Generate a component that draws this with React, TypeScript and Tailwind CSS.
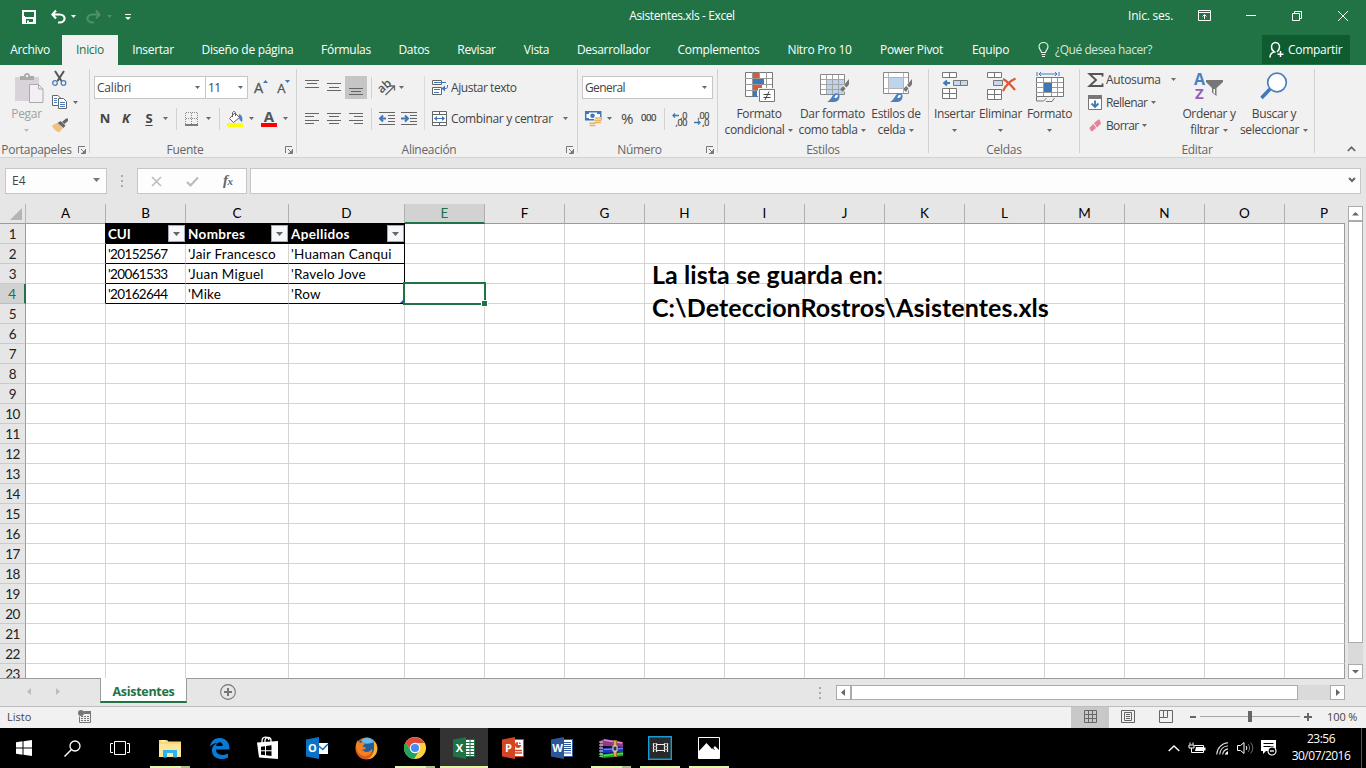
import type { ReactNode } from "react";

type Kids = { children?: ReactNode };

function Svg({ w, h, className = "", children }: Kids & { w: number; h: number; className?: string }) {
  return (
    <svg width={w} height={h} viewBox={`0 0 ${w} ${h}`} fill="none" className={`block shrink-0 overflow-visible ${className}`}>
      {children}
    </svg>
  );
}

function Arrow({ className = "", color = "#6a6a6a" }: { className?: string; color?: string }) {
  return (
    <Svg w={5} h={3} className={className}>
      <path d="M0 0h5L2.500 3z" fill={color} />
    </Svg>
  );
}

function Launcher() {
  return (
    <Svg w={8} h={8} className="ml-[5px]">
      <path d="M.5 7V.5H7M3 3l3 3M7.500 3v4.500H3" stroke="#777" />
      <path d="M7 4v3H4z" fill="#777" />
    </Svg>
  );
}

function Group({ width, label, launcher, children }: Kids & { width: string; label: string; launcher?: boolean }) {
  return (
    <section className={`flex h-[92px] shrink-0 ${width}`}>
      <div className="flex min-w-0 flex-1 flex-col">
        <div className="h-[76px]">{children}</div>
        <div className="flex h-4 items-center pt-[1px]">
          <div className="flex-1 text-center tracking-[-0.3px] whitespace-nowrap text-[#666]">{label}</div>
          {launcher && (
            <div className="w-4">
              <Launcher />
            </div>
          )}
        </div>
      </div>
      <div className="mt-1 h-[84px] w-px bg-[#d2d2d2]" />
    </section>
  );
}

function Big({ width, icon, top, bottom }: { width: string; icon: ReactNode; top: string; bottom?: string }) {
  return (
    <div className={`flex shrink-0 flex-col items-center pt-[7px] tracking-[-0.35px] ${width}`}>
      <div className="flex h-8 items-start justify-center">{icon}</div>
      <div className="mt-[2px] h-4 leading-4 whitespace-nowrap">{top}</div>
      <div className="flex h-4 items-center gap-1 leading-4 whitespace-nowrap">
        {bottom}
        <Arrow />
      </div>
    </div>
  );
}

function Lines({ ys, xs, className = "" }: { ys: number[]; xs: [number, number][]; className?: string }) {
  return (
    <Svg w={14} h={16} className={className}>
      {ys.map((y, i) => (
        <path key={y} d={`M${xs[i][0]} ${y + 0.5}H${xs[i][1]}`} stroke="#666" />
      ))}
    </Svg>
  );
}

function Brush() {
  return (
    <>
      <path d="M29.500 6v6.500l-5.500 8-4-3.500z" fill="#f1f1f1" />
      <path d="M29 7v5.500l-2.500 3-2.500-2.500z" fill="#777" />
      <path d="m23.200 14 2.300 2.500-2.500 3.500-3-2.700z" fill="#777" />
      <path d="M7 30c3-1.500 4-4 6-7 2-2.500 6-2.500 6.500.500.5 3-1.500 6.500-5.500 6.500z" fill="#4a80bd" />
      <path d="M14.500 26c0-2.500 1.500-3.500 3-3.300 1 1.800-.5 3.500-3 3.300z" fill="#fff" />
    </>
  );
}

const full: [number, number] = [0, 14];

/* ---------- title bar ---------- */

function TitleBar() {
  return (
    <header className="flex h-[35px] items-center text-white">
      <Svg w={14} h={14} className="ml-[22px] mt-[-1px]">
        <path d="M0 0h14v14H0z" fill="#fff" />
        <path d="M3 2h9v5H3zM4 9h7v4H4zM2 2h1v4H2z" fill="#217346" />
        <path d="M5 10.500h2V14H5zM7 12h4v2H7z" fill="#fff" />
        <path d="M5 13h2v-2H5z" fill="#fff" />
      </Svg>
      <Svg w={15} h={14} className="ml-[15px] mt-[-1px]">
        <path d="M5 .5 1.500 4.500 5 8.500M2 4.500h6.500c7 0 6.500 8 0 8H7" stroke="#fff" strokeWidth="2.200" />
      </Svg>
      <Arrow color="#fff" className="ml-[5px] mt-[-2px]" />
      <Svg w={15} h={14} className="ml-[10px] mt-[-1px]">
        <path d="m10 .5 3.500 4-3.500 4M13 4.500H6.500c-7 0-6.500 8 0 8H8" stroke="#4f9069" strokeWidth="2" />
      </Svg>
      <Arrow color="#4f9069" className="ml-[6px] mt-[-2px]" />
      <Svg w={6} h={7} className="ml-[13px] mt-[-1px]">
        <path d="M0 .5h6" stroke="#fff" />
        <path d="M0 3h6L3 6z" fill="#fff" />
      </Svg>
      <div className="mt-[-3px] ml-[497px] w-[108px] text-center tracking-[-0.38px] whitespace-nowrap">Asistentes.xls - Excel</div>
      <div className="mt-[-3px] ml-[392px] w-[48px] tracking-[-0.2px] whitespace-nowrap">Inic. ses.</div>
      <Svg w={13} h={11} className="ml-[22px] mt-[-4px]">
        <path d="M.5.5h12v10H.5zM.5 2.500h12M6.500 9V4.500M4.500 6.500l2-2 2 2" stroke="#fff" />
      </Svg>
      <div className="ml-[35px] mt-[-4px] h-px w-[10px] bg-white" />
      <Svg w={10} h={10} className="ml-[36px] mt-[-4px]">
        <path d="M.5 2.500h7v7h-7zM2.500 2.500v-2h7v7h-2" stroke="#fff" />
      </Svg>
      <Svg w={10} h={10} className="ml-[36px] mt-[-4px]">
        <path d="m0 0 10 10M10 0 0 10" stroke="#fff" />
      </Svg>
    </header>
  );
}

const tabs: [string, string][] = [
  ["Archivo", "w-[60px]"],
  ["Inicio", "ml-[2px] w-[56px] bg-[#f1f1f1] text-[#217346]"],
  ["Insertar", "w-[70px]"],
  ["Diseño de página", "w-[119px]"],
  ["Fórmulas", "w-[78px]"],
  ["Datos", "w-[58px]"],
  ["Revisar", "w-[67px]"],
  ["Vista", "w-[53px]"],
  ["Desarrollador", "w-[101px]"],
  ["Complementos", "w-[109px]"],
  ["Nitro Pro 10", "w-[93px]"],
  ["Power Pivot", "w-[91px]"],
  ["Equipo", "w-[67px]"],
];

function TabBar() {
  return (
    <nav className="flex h-[30px] items-stretch text-white">
      {tabs.map(([name, cls]) => (
        <div key={name} className={`flex shrink-0 items-center justify-center tracking-[-0.3px] whitespace-nowrap ${cls}`}>
          {name}
        </div>
      ))}
      <div className="ml-[14px] flex items-center text-[#d6e6dc]">
        <Svg w={11} h={15} className="mt-[-2px]">
          <path d="M3.500 10.500C3.500 8.500 1 7.500 1 4.800a4.500 4.300 0 0 1 9 0c0 2.700-2.500 3.700-2.500 5.700zM3.500 12.500h4M4 14.500h3" stroke="#e8f1ec" strokeWidth="1.200" />
        </Svg>
        <span className="ml-[6px] tracking-[-0.45px] whitespace-nowrap">¿Qué desea hacer?</span>
      </div>
      <div className="ml-auto mr-4 flex h-[29px] w-[88px] items-center bg-[#0e5c2f]">
        <Svg w={15} h={16} className="ml-[7px]">
          <path d="M1 15.500c0-3 2-5 4.300-5.500C3 8.500 2.500 6.500 2.500 5a4 4.500 0 0 1 8 0c0 1.500-.5 3.500-2.500 5M11.500 9v6M8.500 12.300h6" stroke="#fff" strokeWidth="1.500" />
        </Svg>
        <span className="ml-1 tracking-[-0.28px]">Compartir</span>
      </div>
    </nav>
  );
}

/* ---------- ribbon ---------- */

function Clipboard() {
  return (
    <Group width="w-[90px]" label="Portapapeles" launcher>
      <div className="flex">
        <div className="ml-2 flex w-[37px] flex-col items-center pt-2">
          <Svg w={29} h={31} className="ml-[6px]">
            <path d="M0 4h24v24H0z" fill="#d8d3d8" />
            <path d="M5 3h4c0-4 6-4 6 0h4v4H5z" fill="#aaa" />
            <path d="M11 2h2v2h-2z" fill="#f1f1f1" />
            <path d="M14.500 11.500h9l4.500 4.500v13.500H14.500z" fill="#f4eef5" stroke="#aaa" />
            <path d="M23.500 11.500v4.500H28" stroke="#aaa" />
          </Svg>
          <div className="mt-[2px] h-4 leading-4 tracking-[-0.3px] text-[#a0a0a0]">Pegar</div>
          <Arrow color="#bbb" className="mt-[7px]" />
        </div>
        <div className="ml-[7px] pt-[6px]">
          <Svg w={15} h={16}>
            <path d="m3 0 6.500 10M12 0 5.500 10" stroke="#555" strokeWidth="2" />
            <circle cx="3" cy="12" r="2.300" stroke="#4a80bd" strokeWidth="1.300" />
            <circle cx="11.500" cy="12" r="2.300" stroke="#4a80bd" strokeWidth="1.300" />
          </Svg>
          <div className="mt-[8px] flex items-center">
            <Svg w={16} h={15}>
              <path d="M.5.5H6L8.500 3v7.500h-8z" fill="#fff" stroke="#666" />
              <path d="M2 3.500h3M2 5.500h3M2 7.500h3" stroke="#4a80bd" />
              <path d="M6.500 3.500h5l3 3v7h-8z" fill="#fff" stroke="#666" />
              <path d="M8 7.500h5M8 9.500h5M8 11.500h5" stroke="#4a80bd" />
            </Svg>
            <Arrow className="ml-[5px]" />
          </div>
          <Svg w={16} h={15} className="mt-[8px]">
            <path d="M0 7.500 5 5l6 5-4 4.500C4 13 1 11 0 7.500z" fill="#edc184" />
            <path d="m5.500 5 3-2 5 4.500-2 2.500z" fill="#666" />
            <path d="m10 4 4-3.500h2V3l-3.500 3z" fill="#666" />
          </Svg>
        </div>
      </div>
    </Group>
  );
}

const VSep = ({ className = "" }: { className?: string }) => <div className={`h-[22px] w-px bg-[#d2d2d2] ${className}`} />;

function FontGroup() {
  return (
    <Group width="w-[207px]" label="Fuente" launcher>
      <div className="flex flex-col gap-2 pt-[11px]">
        <div className="flex h-[23px] items-center">
          <div className="ml-1 flex h-[23px] w-[112px] items-center justify-between border border-[#c6c6c6] bg-white pr-[5px] pl-[2px]">
            <span className="tracking-[-0.2px]">Calibri</span>
            <Arrow />
          </div>
          <div className="ml-[-1px] flex h-[23px] w-[43px] items-center justify-between border border-[#c6c6c6] bg-white pr-1 pl-[2px]">
            <span className="tracking-[-0.5px]">11</span>
            <Arrow />
          </div>
          <div className="ml-[6px] flex h-full items-end pb-[3px] text-[14.5px] leading-[17px] text-[#555]">
            <span className="[-webkit-text-stroke:0.3px_#555]">A</span>
            <Svg w={5} h={3} className="mb-[13px]">
              <path d="M0 3h5L2.500 0z" fill="#3f78b8" />
            </Svg>
          </div>
          <div className="ml-[9px] flex h-full items-end pb-[3px] text-[13px] leading-[16px] text-[#555]">
            <span className="[-webkit-text-stroke:0.3px_#555]">A</span>
            <Svg w={5} h={3} className="mb-[13px]">
              <path d="M0 0h5L2.500 3z" fill="#3f78b8" />
            </Svg>
          </div>
        </div>
        <div className="flex h-[23px] items-center text-[13px] font-bold text-[#444]">
          <span className="mt-[-2px] ml-[9px] w-[12px] text-center">N</span>
          <span className="mt-[-2px] ml-[9px] w-[12px] text-center italic">K</span>
          <span className="mt-[-2px] ml-[12px] w-[10px] text-center underline underline-offset-2">S</span>
          <Arrow className="ml-[9px]" />
          <VSep className="ml-[8px]" />
          <Svg w={13} h={14} className="ml-[8px]">
            <path d="M.5 1v11M12.500 1v11M6.500 1v11M1 .5h12M1 6.500h12" stroke="#888" strokeDasharray="1 1" />
            <path d="M0 13h13" stroke="#555" strokeWidth="1.500" />
          </Svg>
          <Arrow className="ml-[8px]" />
          <VSep className="ml-[8px]" />
          <Svg w={17} h={16} className="ml-[7px]">
            <path d="M7 3 2.500 7.500l4 4 6-5L8 2z" fill="#fff" stroke="#666" />
            <path d="M5.500 6V2c0-2 3-2 3 0v3" stroke="#666" />
            <path d="M12 3c3 1 4 4 3 8-2-1-3-3-3-5z" fill="#4a80bd" />
            <path d="M0 12h16v4H0z" fill="#ff0" />
          </Svg>
          <Arrow className="ml-[5px]" />
          <div className="ml-[7px] flex w-4 flex-col items-center">
            <span className="h-[12px] text-[15px] leading-[11px] text-[#555]">A</span>
            <div className="h-[4px] w-4 bg-[#f00]" />
          </div>
          <Arrow className="ml-[6px]" />
        </div>
      </div>
    </Group>
  );
}

function AlignGroup() {
  return (
    <Group width="w-[281px]" label="Alineación" launcher>
      <div className="flex pt-[11px]">
        <div className="flex flex-col gap-2">
          <div className="flex h-[23px] items-center">
            <Lines className="ml-2" ys={[0, 3, 7]} xs={[full, [2, 12], full]} />
            <Lines className="ml-2" ys={[3, 7, 10]} xs={[full, [2, 12], full]} />
            <div className="ml-1 flex h-[23px] w-[22px] items-center justify-center bg-[#c5c5c5]">
              <Lines ys={[8, 11, 14]} xs={[full, [2, 12], full]} />
            </div>
            <VSep className="ml-1" />
            <Svg w={17} h={16} className="ml-[7px]">
              <text x="0" y="11" transform="rotate(-42 5 9)" fontSize="12" fontWeight="600" fill="#555">ab</text>
              <path d="m6.500 15 9-9M15.500 10.500V6H11" stroke="#666" strokeWidth="1.300" />
            </Svg>
            <Arrow className="ml-[3px]" />
          </div>
          <div className="flex h-[23px] items-center">
            <Lines className="ml-2" ys={[2, 5, 9, 12]} xs={[full, [0, 9], full, [0, 9]]} />
            <Lines className="ml-2" ys={[2, 5, 9, 12]} xs={[full, [2, 12], full, [2, 12]]} />
            <Lines className="ml-2" ys={[2, 5, 9, 12]} xs={[full, [5, 14], full, [5, 14]]} />
            <VSep className="ml-2" />
            <Svg w={16} h={14} className="ml-[7px]">
              <path d="M0 .5h16M9 3.500h7M9 6.500h7M9 9.500h7M0 12.500h16" stroke="#666" />
              <path d="M7 6.500H1.500M4 3.500l-3 3 3 3" stroke="#3f78b8" strokeWidth="2" />
            </Svg>
            <Svg w={16} h={14} className="ml-[6px]">
              <path d="M0 .5h16M9 3.500h7M9 6.500h7M9 9.500h7M0 12.500h16" stroke="#666" />
              <path d="M0 6.500h6M4 3.500l3 3-3 3" stroke="#3f78b8" strokeWidth="2" />
            </Svg>
          </div>
        </div>
        <div className="ml-[7px] h-[54px] w-px bg-[#dcdcdc]" />
        <div className="ml-[7px] flex flex-col gap-2">
          <div className="flex h-[23px] items-center">
            <Svg w={16} h={16}>
              <path d="M.5.5h9v4h-9zM.5 7.500h9v7h-9z" fill="#fff" stroke="#666" />
              <path d="M2 2.500h12M2 9.500h6M2 12.500h5M11 8.500h3c1 0 1.500-1 1.500-2.500V5" stroke="#3f78b8" />
              <path d="M13 5.500v6L9.500 8.500z" fill="#3f78b8" />
            </Svg>
            <span className="ml-[3px] w-[80px] tracking-[-0.45px] whitespace-nowrap">Ajustar texto</span>
          </div>
          <div className="flex h-[23px] items-center">
            <Svg w={15} h={15}>
              <path d="M.5.5h14v14H.5zM.5 3.500h14M.5 11.500h14M7.500 0v3.500M7.500 11.500V15" fill="#fff" stroke="#666" />
              <path d="M2.500 7.500h10" stroke="#3f78b8" />
              <path d="M5 5v5L2 7.500zM10 5v5l3-2.500z" fill="#3f78b8" />
            </Svg>
            <span className="ml-1 w-[108px] tracking-[-0.35px] whitespace-nowrap">Combinar y centrar</span>
            <Arrow className="ml-1" />
          </div>
        </div>
      </div>
    </Group>
  );
}

function NumberGroup() {
  return (
    <Group width="w-[140px]" label="Número" launcher>
      <div className="flex flex-col gap-2 pt-[11px]">
        <div className="ml-1 flex h-[23px] w-[131px] items-center justify-between border border-[#c6c6c6] bg-white pr-[5px] pl-[2px]">
          <span className="tracking-[-0.6px]">General</span>
          <Arrow />
        </div>
        <div className="flex h-[23px] items-center">
          <Svg w={16} h={16} className="ml-[7px]">
            <path d="M.7.7h15v8H.7z" fill="#fff" stroke="#3f78b8" strokeWidth="1.500" />
            <path d="M0 0h4v3H0zM12 0h4v3h-4zM0 7h4v2H0z" fill="#3f78b8" />
            <circle cx="7.500" cy="4.700" r="2.300" fill="#3f78b8" />
            <path d="M9 6h7v7H9zM4 11h7v5H4z" fill="#f1f1f1" />
            <path d="M10 7h6M9.500 9.200h6.500M9.500 11.400h6.500M4.500 12.300h6M4.500 14.500h6" stroke="#e8b566" strokeWidth="1.600" />
          </Svg>
          <Arrow className="ml-[6px]" />
          <span className="mt-[-2px] ml-[9px] w-[14px] text-[15px] tracking-[-0.5px]">%</span>
          <span className="mt-[-2px] ml-[6px] w-[16px] text-[9.5px] tracking-[-0.4px] [-webkit-text-stroke:0.25px_#444]">000</span>
          <VSep className="ml-[7px]" />
          <div className="ml-[7px] w-[15px] text-[9px] leading-[7px] tracking-[-0.4px] [-webkit-text-stroke:0.2px_#444]">
            <div className="flex items-center justify-between">
              <Svg w={7} h={5}>
                <path d="M7 2.500H1M3 .5l-2 2 2 2" stroke="#3f78b8" strokeWidth="1.300" />
              </Svg>
              ,0
            </div>
            <div className="text-right">,00</div>
          </div>
          <div className="ml-[7px] w-[15px] text-[9px] leading-[7px] tracking-[-0.4px] [-webkit-text-stroke:0.2px_#444]">
            <div className="text-right">,00</div>
            <div className="flex items-center justify-between">
              <Svg w={7} h={5}>
                <path d="M0 2.500h6M4 .5l2 2-2 2" stroke="#3f78b8" strokeWidth="1.300" />
              </Svg>
              ,0
            </div>
          </div>
        </div>
      </div>
    </Group>
  );
}

function StylesGroup() {
  return (
    <Group width="w-[211px]" label="Estilos">
      <div className="flex pl-[3px]">
        <Big
          width="w-[76px]"
          top="Formato"
          bottom="condicional"
          icon={
            <Svg w={31} h={31} className="ml-[3px]">
              <path d="M.5.5h27v24H.5z" fill="#fff" stroke="#777" />
              <path d="M0 6.500h27M0 12.500h27M0 18.500h27M7.500 0v24M14.500 0v24M21.500 0v24" stroke="#999" />
              <path d="M8 1h6v5H8zM8 13h9v5H8z" fill="#d9593a" />
              <path d="M8 7h11v5H8zM8 19h4v6H8z" fill="#3f78b8" />
              <path d="M13 16h17v14H13z" fill="#f1f1f1" />
              <path d="M14.500 17.500h15v12h-15z" fill="#fff" stroke="#777" />
              <path d="M18.500 22.500h7M18.500 25.500h7M24 19.500l-4 8.500" stroke="#444" />
            </Svg>
          }
        />
        <Big
          width="w-[71px]"
          top="Dar formato"
          bottom="como tabla"
          icon={
            <Svg w={31} h={31} className="ml-[5px]">
              <path d="M.5 2.500h24v20H.5z" fill="#fff" stroke="#888" />
              <path d="M7 8h17v14H7z" fill="#bfd3ea" />
              <path d="M1 7.500h23M1 12.500h23M1 17.500h23M6.500 3v19M12.500 3v19M18.500 3v19" stroke="#a5a5a5" />
              <Brush />
            </Svg>
          }
        />
        <Big
          width="w-[56px]"
          top="Estilos de"
          bottom="celda"
          icon={
            <Svg w={31} h={31} className="ml-[5px]">
              <path d="M.5.5h25v21H.5z" fill="#fff" stroke="#888" />
              <path d="M1 5.500h24M1 16.500h24M5.500 1v20M20.500 1v20" stroke="#b5b5b5" />
              <path d="M6 6h14v10H6z" fill="#bfd3ea" />
              <Brush />
            </Svg>
          }
        />
      </div>
    </Group>
  );
}

function CellsGroup() {
  return (
    <Group width="w-[151px]" label="Celdas">
      <div className="flex pl-[3px]">
        <Big
          width="w-[45px]"
          top="Insertar"
          icon={
            <Svg w={27} h={28} className="ml-[2px]">
              <path d="M.5.500h14v5H.5zM7.500.500v5M.5 16.500h14v10H.5zM7.500 16.500v10M.5 21.500h14" fill="#fff" stroke="#777" />
              <path d="M11.500 8.500h14v5h-14zM18.500 8.500v5" fill="#c5d8ee" stroke="#777" />
              <path d="M8 11H2.500M5 8.500 2 11l3 2.500" stroke="#3f78b8" strokeWidth="1.800" />
            </Svg>
          }
        />
        <Big
          width="w-[47px]"
          top="Eliminar"
          icon={
            <Svg w={31} h={28} className="ml-[3px]">
              <path d="M.5.500h14v5H.5zM7.500.500v5M.5 17.500h14v10H.5zM7.500 17.500v10M.5 22.500h14" fill="#fff" stroke="#777" />
              <path d="M6.500 8.500h9v5h-9z" fill="#c5d8ee" stroke="#777" />
              <path d="M16 7c4 2 8 6 12 11M28.500 6.500C23 9 19 13 16 19" stroke="#d9593a" strokeWidth="2.300" />
            </Svg>
          }
        />
        <Big
          width="w-[51px]"
          top="Formato"
          icon={
            <Svg w={29} h={31} className="ml-[1px]">
              <path d="M.5 5.500h27v19H.500z" fill="#fff" stroke="#777" />
              <path d="M0 10.500h27M0 15.500h27M0 20.500h27M7.500 6v18M15.500 6v18M21.500 6v18" stroke="#999" />
              <path d="M8 11h8v9H8z" fill="#3f78b8" />
              <path d="M.5 25v4h7l3-3M10 29.500h6l2.500-3.500" stroke="#777" />
              <path d="M1 0v4M23 0v4M3 2h18M5 0 3 2l2 2M19 0l2 2-2 2" stroke="#3f78b8" />
            </Svg>
          }
        />
      </div>
    </Group>
  );
}

function EditGroup() {
  return (
    <Group width="w-[235px]" label="Editar">
      <div className="flex">
        <div className="w-[98px] pt-[3px] pl-2 tracking-[-0.35px]">
          <div className="flex h-[23px] items-center">
            <Svg w={15} h={14}>
              <path d="M14.500 3.500V1H1.500L8 7l-6.500 6h13v-2.500" stroke="#555" strokeWidth="1.900" />
            </Svg>
            <span className="ml-[3px] w-[63px]">Autosuma</span>
            <Arrow className="ml-[2px]" />
          </div>
          <div className="flex h-[23px] items-center">
            <Svg w={14} h={15}>
              <path d="M.5 3.500h13v11H.5z" fill="#fff" stroke="#777" />
              <path d="M0 0h14v4H0z" fill="#777" />
              <path d="M7 5.500V12M3.500 8.500 7 12l3.500-3.500" stroke="#3f78b8" strokeWidth="1.900" />
            </Svg>
            <span className="ml-1 tracking-[-0.55px]">Rellenar</span>
            <Arrow className="ml-1" />
          </div>
          <div className="flex h-[23px] items-center">
            <Svg w={14} h={14}>
              <path d="m6 4 4.500-3.500h1L13 4.500 9 8.500z" fill="#e8819a" />
              <path d="m5.500 4.500 3 4.500-4 3.500H3L1 9z" fill="#e8819a" stroke="#f1f1f1" strokeWidth=".6" />
            </Svg>
            <span className="ml-1 tracking-[-0.65px]">Borrar</span>
            <Arrow className="ml-1" />
          </div>
        </div>
        <Big
          width="w-[62px]"
          top="Ordenar y"
          bottom="filtrar"
          icon={
            <Svg w={31} h={28}>
              <text x="0" y="13" fontSize="16" fontWeight="700" fill="#4a80bd">A</text>
              <text x="1" y="27" fontSize="15" fontWeight="700" fill="#9560b8">Z</text>
              <path d="M12 8h17v2l-6.500 6v8L18 20.500V16L12 10z" fill="#777" />
              <path d="M19.500 17h1.500v5l-1.500-1z" fill="#fff" />
            </Svg>
          }
        />
        <Big
          width="w-[68px]"
          top="Buscar y"
          bottom="seleccionar"
          icon={
            <Svg w={28} h={28}>
              <path d="m10 17-8.500 9" stroke="#3f78b8" strokeWidth="3.500" />
              <circle cx="17" cy="10.500" r="9.300" fill="#fff" stroke="#4a80bd" strokeWidth="1.700" />
            </Svg>
          }
        />
      </div>
    </Group>
  );
}

function Ribbon() {
  return (
    <div className="flex h-[93px] border-b border-[#d2d2d2] bg-[#f1f1f1]">
      <Clipboard />
      <FontGroup />
      <AlignGroup />
      <NumberGroup />
      <StylesGroup />
      <CellsGroup />
      <EditGroup />
      <Svg w={9} h={6} className="mt-[81px] ml-[32px]">
        <path d="m.8 5 3.700-3.700L8.200 5" stroke="#666" strokeWidth="1.700" />
      </Svg>
    </div>
  );
}

/* ---------- formula bar ---------- */

function Dots({ className = "" }: { className?: string }) {
  return (
    <div className={`flex flex-col gap-[3px] ${className}`}>
      <i className="size-[2px] bg-[#aaa]" />
      <i className="size-[2px] bg-[#aaa]" />
      <i className="size-[2px] bg-[#aaa]" />
    </div>
  );
}

function FormulaBar() {
  return (
    <div className="flex h-[46px] items-center">
      <div className="ml-[5px] flex h-[26px] w-[102px] items-center justify-between border border-[#c6c6c6] bg-[#fdfdfd] pr-[6px] pl-[6px]">
        <span>E4</span>
        <Svg w={7} h={4} className="mt-[-2px]">
          <path d="M0 0h7L3.500 4z" fill="#777" />
        </Svg>
      </div>
      <Dots className="ml-[14px]" />
      <div className="ml-[14px] flex h-[26px] w-[110px] items-center border border-[#c6c6c6] bg-[#fdfdfd]">
        <Svg w={11} h={11} className="ml-[13px]">
          <path d="m1 1 9 9M10 1l-9 9" stroke="#bcbcbc" strokeWidth="1.500" />
        </Svg>
        <Svg w={13} h={11} className="ml-[24px]">
          <path d="m1 6 3.500 3.500L12 1.500" stroke="#bcbcbc" strokeWidth="2.200" />
        </Svg>
        <span className="mt-[-2px] ml-[24px] font-['Liberation_Serif',serif] text-[15px] leading-4 font-bold tracking-[-0.5px] text-[#666] italic">
          f<span className="text-[11px]">x</span>
        </span>
      </div>
      <div className="ml-[3px] flex h-[26px] w-[1111px] items-center justify-end border border-[#c6c6c6] bg-[#fdfdfd] pr-[4px]">
        <Svg w={8} h={6} className="mt-[-2px]">
          <path d="m1 1 3 3 3-3" stroke="#666" strokeWidth="2" />
        </Svg>
      </div>
    </div>
  );
}

/* ---------- sheet ---------- */

const cols = "grid-cols-[26px_80px_80px_103px_116px_repeat(11,80px)_60px]";
const letters = "ABCDEFGHIJKLMNOP".split("");
const tableRows: string[][] = [
  ["CUI", "Nombres", "Apellidos"],
  ["'20152567", "'Jair Francesco", "'Huaman Canqui"],
  ["'20061533", "'Juan Miguel", "'Ravelo Jove"],
  ["'20162644", "'Mike", "'Row"],
];

function Filter() {
  return (
    <div className="flex size-[17px] shrink-0 items-center justify-center border border-[#a5a8b4] bg-[#f6f7fb]">
      <Svg w={7} h={4}>
        <path d="M0 0h7L3.500 4z" fill="#666" />
      </Svg>
    </div>
  );
}

function cellStyle(row: number, col: number) {
  const inTable = row < 4 && col >= 1 && col <= 3;
  if (row === 0 && inTable) return "bg-black text-white font-bold border-b border-black pr-px";
  if (inTable) return `border-b border-b-black border-r ${col === 3 ? "border-r-black" : "border-r-[#d4d4d4]"}`;
  if (col === 0 && row < 4) return "border-b border-r border-b-[#d4d4d4] border-r-black";
  if (col === 15) return "border-b border-r border-b-[#d4d4d4] border-r-[#9b9b9b]";
  return "border-b border-r border-[#d4d4d4]";
}

function textStyle(row: number, col: number) {
  if (row === 0) return col === 1 ? "pt-[1px] tracking-[-0.1px]" : "pt-[1px] tracking-[0.35px]";
  return col === 1 ? "pt-[1px] tracking-[-0.65px]" : "pt-[1px] tracking-[0.22px]";
}

function Row({ row }: { row: number }) {
  const active = row === 3;
  return (
    <div className={`grid h-5 shrink-0 ${cols}`}>
      <div
        className={`flex items-center justify-center border-b pt-[1px] text-[13.500px] tracking-[-0.5px] ${
          active ? "border-r-2 border-b-[#bcbcbc] border-r-[#217346] bg-[#d2d2d2] text-[#217346]" : "border-r border-b-[#c9c9c9] border-r-[#9b9b9b] bg-[#e6e6e6] text-[#222]"
        }`}
      >
        {row + 1}
      </div>
      {letters.map((l, c) => {
        const text = c >= 1 && c <= 3 ? tableRows[row]?.[c - 1] : undefined;
        return (
          <div key={l} className={`flex min-w-0 items-center justify-between pl-[2px] whitespace-nowrap ${cellStyle(row, c)}`}>
            {text && <span className={textStyle(row, c)}>{text}</span>}
            {text && row === 0 && <Filter />}
          </div>
        );
      })}
    </div>
  );
}

function Sheet() {
  return (
    <div className="relative flex h-[475px] w-[1345px] flex-col overflow-hidden border-b border-[#9b9b9b] bg-white font-[Lato,sans-serif] text-[13.500px] text-black">
      <div className={`grid h-5 shrink-0 bg-[#e6e6e6] text-[13.500px] ${cols}`}>
        <div className="flex items-end justify-end border-r border-b border-r-[#b5b5b5] border-b-[#9b9b9b] pr-[3px] pb-[3px]">
          <Svg w={12} h={12}>
            <path d="M12 0v12H0z" fill="#b5b5b5" />
          </Svg>
        </div>
        {letters.map((l) => (
          <div
            key={l}
            className={`flex items-center justify-center ${
              l === "E"
                ? "border-r border-b-2 border-r-[#b0b0b0] border-b-[#217346] bg-[#d2d2d2] text-[#217346]"
                : l === "P"
                  ? "border-b border-b-[#9b9b9b] pb-[1px] pl-[18px]"
                  : "border-r border-b border-r-[#b0b0b0] border-b-[#9b9b9b] pb-[1px]"
            }`}
          >
            {l}
          </div>
        ))}
      </div>
      {Array.from({ length: 23 }, (_, i) => (
        <Row key={i} row={i} />
      ))}
      <div className="absolute top-[19px] left-[105px] h-px w-[300px] bg-black" />
      <Svg w={4} h={4} className="absolute top-[95px] left-[400px]">
        <path d="M4 0v4H0z" fill="#3a50a8" />
      </Svg>
      <div className="absolute top-[78px] left-[403px] h-[23px] w-[83px] border-2 border-[#217346]" />
      <div className="absolute top-[96px] left-[481px] size-[7px] border border-white bg-[#217346]" />
      <div className="absolute top-[54px] left-[652px] text-[25px] leading-[33px] font-bold tracking-[0.07px] whitespace-nowrap">
        <p>La lista se guarda en:</p>
        <p>C:\DeteccionRostros\Asistentes.xls</p>
      </div>
    </div>
  );
}

function ScrollButton({ d, className = "" }: { d: string; className?: string }) {
  return (
    <div className={`flex size-[15px] shrink-0 items-center justify-center border border-[#ababab] bg-white ${className}`}>
      <Svg w={7} h={7}>
        <path d={d} fill="#666" />
      </Svg>
    </div>
  );
}

function SheetTabs() {
  return (
    <div className="flex h-[27px] bg-[#e6e6e6]">
      <Svg w={4} h={7} className="mt-[9px] ml-[27px]">
        <path d="M4 0v7L0 3.500z" fill="#bcbcbc" />
      </Svg>
      <Svg w={4} h={7} className="mt-[9px] ml-[25px]">
        <path d="M0 0v7l4-3.500z" fill="#bcbcbc" />
      </Svg>
      <div className="relative mt-[-1px] ml-[40px] flex h-[25px] w-[87px] items-center justify-center border-x border-b-2 border-x-[#9b9b9b] border-b-[#217346] bg-white pt-[4px] text-[12.500px] font-bold tracking-[-0.3px] text-[#217346]">
        Asistentes
      </div>
      <Svg w={16} h={16} className="mt-[5px] ml-[33px]">
        <circle cx="8" cy="8" r="7.400" stroke="#777" strokeWidth="1.100" />
        <path d="M8 4v8M4 8h8" stroke="#777" strokeWidth="2" />
      </Svg>
      <Dots className="mt-[8px] ml-[583px]" />
      <div className="mt-[6px] ml-[15px] flex h-[15px] w-[509px] bg-[#dadada]">
        <ScrollButton d="M5 0v7L1 3.500z" />
        <div className="h-[15px] w-[447px] border border-[#ababab] bg-white" />
        <ScrollButton d="M2 0v7l4-3.500z" className="ml-auto" />
      </div>
    </div>
  );
}

function StatusBar() {
  return (
    <div className="flex h-[22px] items-center border-t border-[#bebebe] bg-[#f1f1f1] text-[11px]">
      <span className="mt-[-2px] ml-[7px] w-[71px]">Listo</span>
      <Svg w={13} h={13} className="mt-[-2px]">
        <path d="M5.500 1.500h7v11h-11v-6" stroke="#777" />
        <path d="M6 1h7v3H6z" fill="#777" />
        <circle cx="3" cy="3" r="3" fill="#777" />
        <path d="M3 6.500h8M3 8.500h8M3 10.500h8" stroke="#777" strokeDasharray="2 1" />
      </Svg>
      <div className="ml-[980px] flex h-[21px] w-[38px] items-center justify-center bg-[#c8c8c8] pb-[2px]">
        <Svg w={13} h={13}>
          <path d="M.5.500h12v12H.500zM.5 4.500h12M.5 8.500h12M4.500.500v12M8.500.500v12" stroke="#666" />
        </Svg>
      </div>
      <Svg w={14} h={13} className="mt-[-2px] ml-[12px]">
        <path d="M.5.500h13v12H.500zM3.500 2.500h7v8h-7zM5 4.500h4M5 6.500h4M5 8.500h4" stroke="#666" />
      </Svg>
      <Svg w={14} h={13} className="mt-[-2px] ml-[24px]">
        <path d="M.5.500h13v12H.500zM.5 7.500h8V.500M4.500 7.500v-7" stroke="#666" />
      </Svg>
      <div className="mt-[-1px] ml-[17px] h-[2px] w-[6px] bg-[#666]" />
      <div className="mt-[-2px] ml-[4px] flex h-[11px] w-[100px] items-center">
        <div className="h-px w-[48px] bg-[#a5a5a5]" />
        <div className="h-[11px] w-1 bg-[#666]" />
        <div className="h-px w-[48px] bg-[#a5a5a5]" />
      </div>
      <Svg w={8} h={8} className="mt-[-1px] ml-[4px]">
        <path d="M4 0v8M0 4h8" stroke="#666" strokeWidth="2" />
      </Svg>
      <span className="mt-[-2px] ml-[15px] tracking-[-0.1px] whitespace-nowrap">100 %</span>
    </div>
  );
}

/* ---------- task bar ---------- */

function Task({ children, line, active }: Kids & { line?: "one" | "many" | "full"; active?: boolean }) {
  return (
    <div className={`flex h-10 w-12 shrink-0 flex-col items-center ${active ? "bg-[#333]" : ""}`}>
      <div className="flex h-[38px] items-center justify-center pt-[2px]">{children}</div>
      {line === "full" && <div className="h-[2px] w-12 bg-[#e2f7a9]" />}
      {line === "one" && <div className="h-[2px] w-10 bg-[#e2f7a9]" />}
      {line === "many" && (
        <div className="flex h-[2px] w-10 bg-[#aebf86]">
          <div className="w-[31px] bg-[#e2f7a9]" />
        </div>
      )}
    </div>
  );
}

function Office({ color, letter, children }: Kids & { color: string; letter: string }) {
  return (
    <Svg w={22} h={22}>
      {children}
      <path d="M0 2.500 13 0v22L0 19.500z" fill={color} />
      <text x="6.500" y="15" textAnchor="middle" fontSize="11" fontWeight="700" fill="#fff">
        {letter}
      </text>
    </Svg>
  );
}

function TaskBar() {
  return (
    <footer className="flex h-10 bg-black text-white">
      <Task>
        <Svg w={16} h={16}>
          <path d="M0 2.200 6.500 1.300v6.200H0zM7.500 1.200 16 0v7.500H7.500zM0 8.500h6.500v6.200L0 13.800zM7.500 8.500H16V16l-8.500-1.200z" fill="#fff" />
        </Svg>
      </Task>
      <Task>
        <Svg w={17} h={17}>
          <circle cx="11" cy="6" r="5" stroke="#fff" strokeWidth="1.300" />
          <path d="M7.500 9.500.5 16.500" stroke="#fff" strokeWidth="1.500" />
        </Svg>
      </Task>
      <Task>
        <Svg w={20} h={14}>
          <path d="M4.500.5h11v13h-11zM3 2.500H.5v9H3M17 2.500h2.500v9H17" stroke="#fff" />
        </Svg>
      </Task>
      <div className="ml-[2px] flex gap-px">
        <Task line="many">
          <Svg w={22} h={19}>
            <path d="M0 1h8l1.500 1.500H22V18H0z" fill="#f8d775" />
            <path d="M0 5h22v13H0z" fill="#fde59a" />
            <path d="M2 2h4" stroke="#fff" />
            <path d="M4 18.500V11h14v7.500h-4V14H8v4.500z" fill="#27b5f0" />
          </Svg>
        </Task>
        <Task>
          <Svg w={21} h={22}>
            <path d="M1 9.500C2 3.500 6 1 11 1c6 0 10 5 9.500 11.500H7c0 6 8 6.500 12 4v4c-6 3-15 2-16-6-.5-4 2-7 5-8.500-2 0-5 1.500-7 3.500zM7.200 9h6.500c0-5-6-5-6.500 0z" fill="#0a78d7" />
          </Svg>
        </Task>
        <Task>
          <Svg w={22} h={24}>
            <path d="M5 8V5c0-5 6-5 7-1M8 7V4.500c0-4 6-4 6 0V6" stroke="#fff" strokeWidth="1.300" />
            <path d="M0 6.500 21 5v18L2 21.500z" fill="#fff" />
            <path d="m4 10.700 4-.5v4H4zM9 10l5.500-.7v4.900H9zM4 15.200h4v4l-4-.5zM9 15.200h5.500V20L9 19.300z" fill="#000" />
          </Svg>
        </Task>
        <Task>
          <Office color="#0a72c6" letter="O">
            <path d="M12 6h10v11H12z" fill="#fff" />
            <path d="m12 8.500 4.800 4L22 7" stroke="#0a72c6" strokeWidth="1.600" />
          </Office>
        </Task>
        <Task>
          <Svg w={23} h={23}>
            <circle cx="11.500" cy="11.500" r="11" fill="#dd5a1a" />
            <circle cx="12" cy="9" r="8.500" fill="#1f5f9f" />
            <path d="M6 3c5-4 11-2 13 2-4 2-9 2-11 1z" fill="#6cbbe4" />
            <path d="M.7 10C.7 6.500 2 4.500 3 3c.3 1.800 1 2.500 2.300 2.700C7 4.700 9 5 9.500 7c0 1-1.800 1.500-1.800 2.500 1 .8 3.300.5 3.300 1.500-1 2-2.500 1.500-4 1.500 2 3.500 8 3 10-.5 1 2-1 5.500-4.500 6.500-5 1.500-10-1.500-11.800-8.500z" fill="#f08222" />
            <path d="M18.500 3.500c4 3.500 5 9 2 14-2 3-5 4.500-8 4.500 5-2 8-7 6-18.500z" fill="#f9b52c" />
          </Svg>
        </Task>
        <Task line="many">
          <Svg w={22} h={22}>
            <circle cx="11" cy="11" r="11" fill="#fdd23e" />
            <path d="M1.500 5.500A11 11 0 0 1 20.500 6H11L6 12z" fill="#dd4b3e" />
            <path d="M1.500 5.500A11 11 0 0 0 10 22l5-8H7z" fill="#1da462" />
            <circle cx="11" cy="11" r="5.200" fill="#fff" />
            <circle cx="11" cy="11" r="4.100" fill="#4a8af4" />
          </Svg>
        </Task>
        <Task line="full" active>
          <Office color="#1f7244" letter="X">
            <path d="M12 2.500h9.500v17H12z" fill="#fff" stroke="#1f7244" />
            <path d="M13 5.500h8M13 8.500h8M13 11.500h8M13 14.500h8M13 17.500h8M17 3v16" stroke="#1f7244" />
          </Office>
        </Task>
        <Task>
          <Office color="#d24625" letter="P">
            <path d="M12 2.500h9.500v17H12z" fill="#fff" stroke="#d24625" />
            <path d="M13 13.500h7M13 16h7" stroke="#d24625" strokeWidth="1.300" />
            <circle cx="16" cy="8" r="3" fill="#d24625" />
            <path d="M16.500 4v3.500H20" stroke="#fff" strokeWidth="1.200" />
          </Office>
        </Task>
        <Task>
          <Office color="#2b579a" letter="W">
            <path d="M12 2.500h9.500v17H12z" fill="#fff" stroke="#2b579a" />
            <path d="M13 5.500h7M13 7.500h7M13 9.500h7M13 11.500h7M13 13.500h7M13 16h7" stroke="#2b579a" />
          </Office>
        </Task>
        <Task line="many">
          <Svg w={25} h={20}>
            <path d="m1 3 4-2 19 3v5L5 8 1 9z" fill="#8d3c86" />
            <path d="m5 2 18 3" stroke="#e28ade" strokeWidth="1.500" />
            <path d="m1 9 4 1 19-1v5l-19 1-4-1z" fill="#2439c0" />
            <path d="m5 11.500 19-1" stroke="#7590ff" />
            <path d="m1 14 4 2 19-2v4L5 20l-4-1z" fill="#16a02c" />
            <path d="m5 17.500 19-2" stroke="#72ee63" />
            <path d="M1 3v16M3 3v16" stroke="#ddd" strokeDasharray="2 1" />
            <path d="M14 2h4v17h-4z" fill="#9a6a2c" />
            <path d="M16 3v15" stroke="#e8c070" strokeWidth="1.500" />
            <path d="M14 8h4v5h-4z" fill="#333" stroke="#ddd" />
          </Svg>
        </Task>
        <Task line="one">
          <Svg w={24} h={24}>
            <path d="M.7.7h22.600v22.600H.7z" fill="#292929" stroke="#169bd8" strokeWidth="1.400" />
            <path d="M5.500 7v9M8.500 7v9M16.500 7v9M19.500 7v9M8 8.500h9M8 14.500h9" stroke="#eee" strokeWidth="1.200" />
            <path d="M5 7.500h4M5 10.500h4M5 13.500h4M16 7.500h4M16 10.500h4M16 13.500h4" stroke="#bbb" strokeWidth=".8" />
          </Svg>
        </Task>
        <Task line="one">
          <Svg w={22} h={22}>
            <path d="M.5.5h21v21H.5z" stroke="#fff" />
            <path d="M1 14 8.500 6l5.500 6 3-3 4 4v8.500H1z" fill="#fff" />
            <path d="m13 8 3.500 5" stroke="#000" strokeWidth=".8" />
          </Svg>
        </Task>
      </div>
      <div className="ml-auto flex h-10 items-center">
        <Svg w={12} h={7}>
          <path d="m.7 6 5.300-5L11.300 6" stroke="#fff" strokeWidth="1.400" />
        </Svg>
        <Svg w={17} h={12} className="ml-[9px]">
          <path d="M5.500 3.500h9v7h-9" stroke="#fff" />
          <path d="M7 5h7v4H6zM15 5.500h1.500v3H15z" fill="#fff" />
          <path d="M1 .5v2M4 .5v2M0 3h5v3H0z" stroke="#fff" />
          <path d="M2.500 6v4.500H6" stroke="#fff" />
        </Svg>
        <Svg w={13} h={13} className="ml-[10px]">
          <path d="M.7 12.500C1 6 6 1 12 .7M3.700 12.500c.3-5 3.800-8.300 8.300-8.800M6.700 12.500c.3-3 2.300-5 5.300-5.600M9.500 12.500c.2-1.300 1-2.200 2.500-2.500" stroke="#ddd" strokeWidth="1.100" />
          <path d="M12 9v3.500H9z" fill="#fff" />
        </Svg>
        <Svg w={17} h={14} className="ml-[8px]">
          <path d="M.5 4.500h3l3.500-3v11l-3.500-3h-3z" stroke="#fff" />
          <path d="M9 5c1 1 1 3 0 4" stroke="#fff" />
          <path d="M11 3c2 2 2 6 0 8M13.500 1.500c3 3 3 8 0 11" stroke="#777" />
        </Svg>
        <Svg w={16} h={16} className="ml-[7px]">
          <path d="M0 0h15v11H5l-3 3v-3H0z" fill="#fff" />
          <path d="M2.500 3.500h10M2.500 6.500h10" stroke="#000" />
          <circle cx="11" cy="11" r="4" fill="#000" stroke="#fff" strokeWidth="1.200" />
          <path d="M9 11h4" stroke="#fff" strokeWidth="1.300" />
        </Svg>
        <div className="mt-[-2px] ml-[14px] w-[60px] text-center leading-[17px] tracking-[-0.5px] whitespace-nowrap">
          <div>23:56</div>
          <div>30/07/2016</div>
        </div>
        <div className="mr-1 ml-[10px] h-10 w-px bg-[#555]" />
      </div>
    </footer>
  );
}

export default function App() {
  return (
    <div className="flex h-[768px] w-[1366px] flex-col overflow-hidden bg-[#e6e6e6] font-['Open_Sans','Noto_Sans',sans-serif] text-[12px] leading-4 text-[#444] select-none">
      <div className="bg-[#217346]">
        <TitleBar />
        <TabBar />
      </div>
      <Ribbon />
      <FormulaBar />
      <div className="flex h-[475px]">
        <Sheet />
        <div className="mt-[2px] ml-[3px] flex h-[473px] w-[15px] flex-col bg-[#dadada]">
          <ScrollButton d="M0 5.500h7L3.500 2z" />
          <div className="h-[422px] border border-[#ababab] bg-white" />
          <ScrollButton d="M0 2h7L3.500 5.500z" className="mt-auto" />
        </div>
      </div>
      <SheetTabs />
      <StatusBar />
      <TaskBar />
    </div>
  );
}
